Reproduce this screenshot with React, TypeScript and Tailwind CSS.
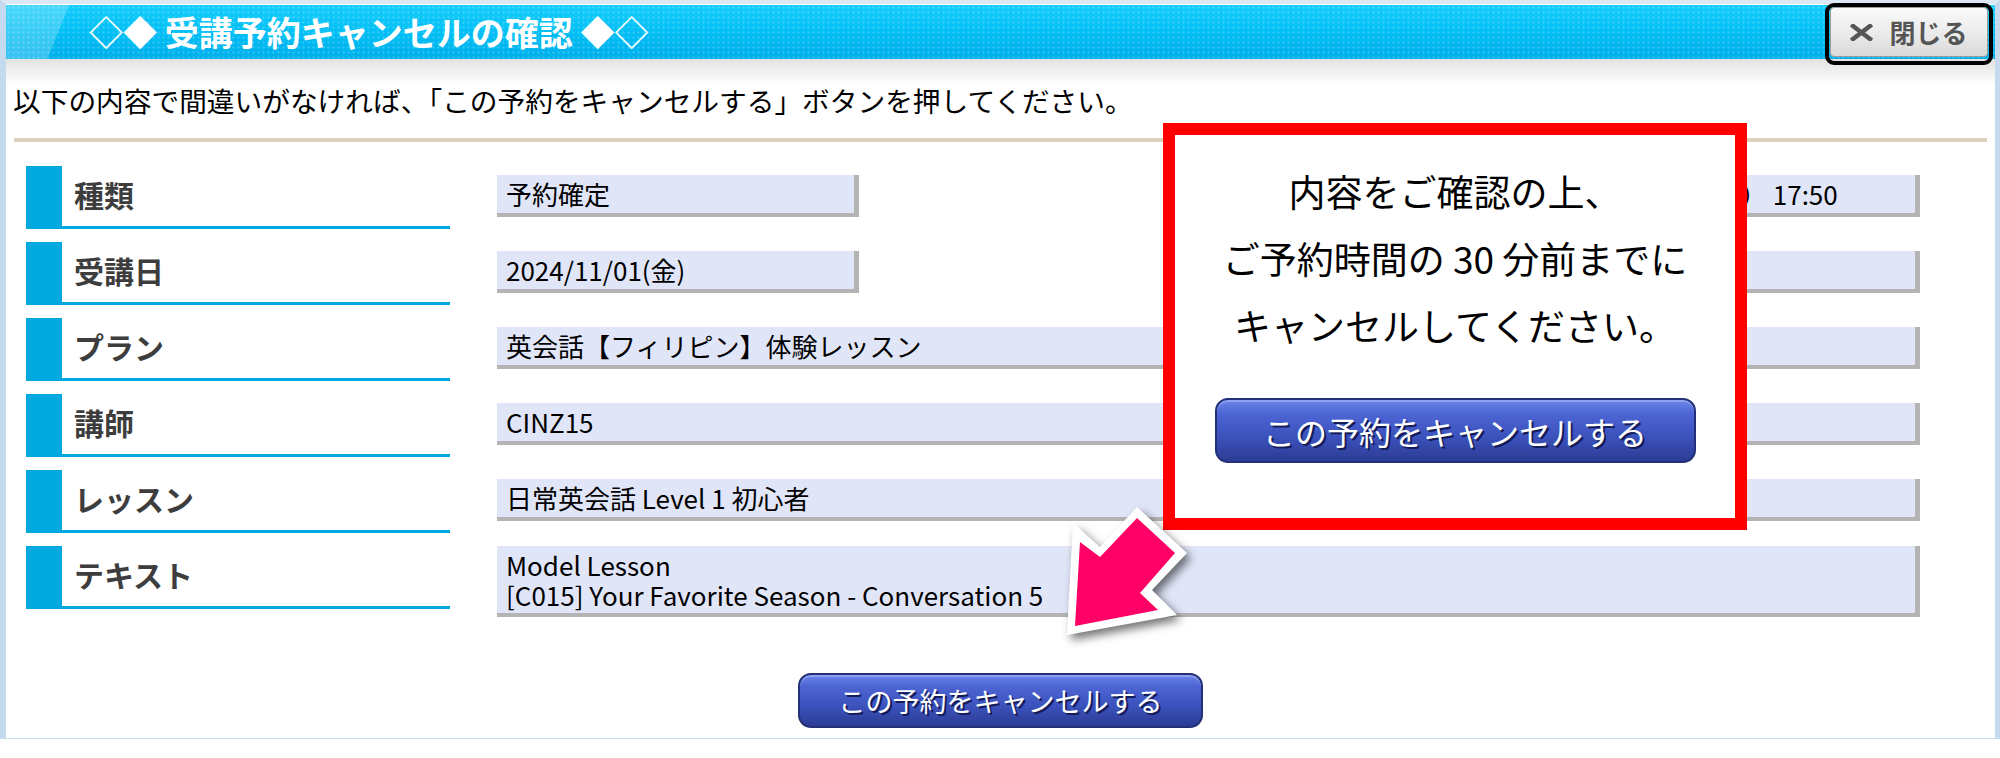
import React from "react";

function Label({ text }: { text: string }) {
  return (
    <div className="flex h-[63px] w-[424px] shrink-0">
      <div className="w-[36px] bg-[#00a9e0]" />
      <div className="flex flex-1 items-center border-b-[3px] border-[#00a9e0] pb-[4px] pl-[12px] text-[30px] font-bold leading-none text-[#3d3d3d]">
        {text}
      </div>
    </div>
  );
}

function Value({ children, className = "" }: { children?: React.ReactNode; className?: string }) {
  return (
    <div
      className={`mt-[9px] flex h-[42px] items-center whitespace-nowrap border-b-[4px] border-r-[5px] border-[#b4b4b4] bg-[#e0e6f8] pl-[9px] text-[26px] leading-none text-black ${className}`}
    >
      {children}
    </div>
  );
}

function BlueButton({ w, h, size }: { w: string; h: string; size: string }) {
  return (
    <button
      className={`${w} ${h} ${size} flex items-center justify-center rounded-[13px] border-[2px] border-[#22307a] bg-[linear-gradient(180deg,#6d86ea_0%,#4d65d4_22%,#3c52bc_60%,#2c3c94_100%)] font-normal leading-none text-white shadow-[inset_0_2px_0_rgba(255,255,255,0.25)] [text-shadow:2px_2px_0_#141c58]`}
    >
      この予約をキャンセルする
    </button>
  );
}

export default function App() {
  return (
    <div className="relative h-[758px] w-[2000px] overflow-hidden bg-white font-['Noto_Sans_CJK_JP','Noto_Sans',sans-serif]">
      {/* frame */}
      <div className="flex h-[739px] flex-col border-b-[1px] border-l-[6px] border-r-[5px] border-t-[4px] border-[#c6daef] border-t-[#dce9f5]">
        {/* title bar */}
        <div className="mt-[1px] flex h-[54px] shrink-0 items-center pl-[83px] text-[34px] font-bold leading-none text-white [background-image:linear-gradient(112deg,rgba(255,255,255,0.22)_0,rgba(255,255,255,0.22)_58px,transparent_59px),radial-gradient(rgba(255,255,255,0.16)_1px,transparent_1.3px),linear-gradient(180deg,#16cdfc_0%,#00bdf4_55%,#00afeb_100%)] [background-size:100%_100%,5px_5px,100%_100%]">
          ◇◆ 受講予約キャンセルの確認 ◆◇
        </div>

        {/* content */}
        <div className="flex flex-1 flex-col bg-[linear-gradient(180deg,#e2e2e2_0px,#ffffff_26px)]">
          <div className="pl-[7px] pt-[21px] text-[27.7px] leading-[40px] text-black">
            以下の内容で間違いがなければ、「この予約をキャンセルする」ボタンを押してください。
          </div>
          <div className="mx-[8px] mt-[18px] h-[4px] bg-[#ddd1c2]" />

          <div className="mt-[24px] flex flex-col gap-[13px] pl-[20px] pr-[75px]">
            <div className="flex items-start">
              <Label text="種類" />
              <Value className="ml-[47px] w-[362px]">予約確定</Value>
              <Value className="ml-[756px] flex-1">17:25（～）&nbsp;17:50</Value>
            </div>
            <div className="flex items-start">
              <Label text="受講日" />
              <Value className="ml-[47px] w-[362px]">2024/11/01(金)</Value>
              <Value className="ml-[756px] flex-1" />
            </div>
            <div className="flex items-start">
              <Label text="プラン" />
              <Value className="ml-[47px] flex-1">英会話【フィリピン】体験レッスン</Value>
            </div>
            <div className="flex items-start">
              <Label text="講師" />
              <Value className="ml-[47px] flex-1">CINZ15</Value>
            </div>
            <div className="flex items-start">
              <Label text="レッスン" />
              <Value className="ml-[47px] flex-1">日常英会話 Level 1 初心者</Value>
            </div>
            <div className="flex items-start">
              <Label text="テキスト" />
              <div className="ml-[47px] flex flex-1 flex-col border-b-[4px] border-r-[5px] border-[#b4b4b4] bg-[#e0e6f8] pb-[3px] pl-[9px] pt-[4px] text-[26px] leading-[30px] text-black">
                <span>Model Lesson</span>
                <span>[C015] Your Favorite Season - Conversation 5</span>
              </div>
            </div>
          </div>

          <div className="mt-[56px] flex justify-center">
            <BlueButton w="w-[405px]" h="h-[55px]" size="text-[27px]" />
          </div>
        </div>
      </div>

      {/* close button */}
      <div className="absolute left-[1825px] top-[3px] h-[62px] w-[168px] rounded-[9px] border-[4px] border-black px-[1px] pb-[4px]">
        <div className="flex h-full items-center justify-center gap-[16px] rounded-[4px] border border-[#9c9c9c] bg-[linear-gradient(180deg,#fafafa_0%,#ececec_50%,#d9d9d9_100%)] text-[26px] font-bold leading-none text-[#555]">
          <svg width="23" height="17" viewBox="0 0 23 17">
            <path d="M3 2 L20 15 M20 2 L3 15" stroke="#555" strokeWidth="4.5" strokeLinecap="square" />
          </svg>
          <span>閉じる</span>
        </div>
      </div>

      {/* red notice box */}
      <div className="absolute left-[1163px] top-[123px] flex h-[407px] w-[584px] flex-col items-center border-[12px] border-[#ff0000] bg-white">
        <div className="pt-[23px] text-center text-[37px] leading-[67px] text-black">
          <div>内容をご確認の上、</div>
          <div>ご予約時間の 30 分前までに</div>
          <div>キャンセルしてください。</div>
        </div>
        <div className="mt-[39px]">
          <BlueButton w="w-[481px]" h="h-[65px]" size="text-[32px]" />
        </div>
      </div>

      {/* arrow */}
      <svg
        className="absolute left-[1050px] top-[495px] drop-shadow-[4px_5px_5px_rgba(0,0,0,0.55)]"
        width="150"
        height="150"
        viewBox="0 0 150 150"
      >
        <polygon points="17,140 23,28 50,52 87,12 137,58 102,95 127,120" fill="#ffffff" />
        <polygon points="25,131 30,47 50,62 87,23 125,58 90,98 108,115" fill="#ff0066" />
      </svg>
    </div>
  );
}
